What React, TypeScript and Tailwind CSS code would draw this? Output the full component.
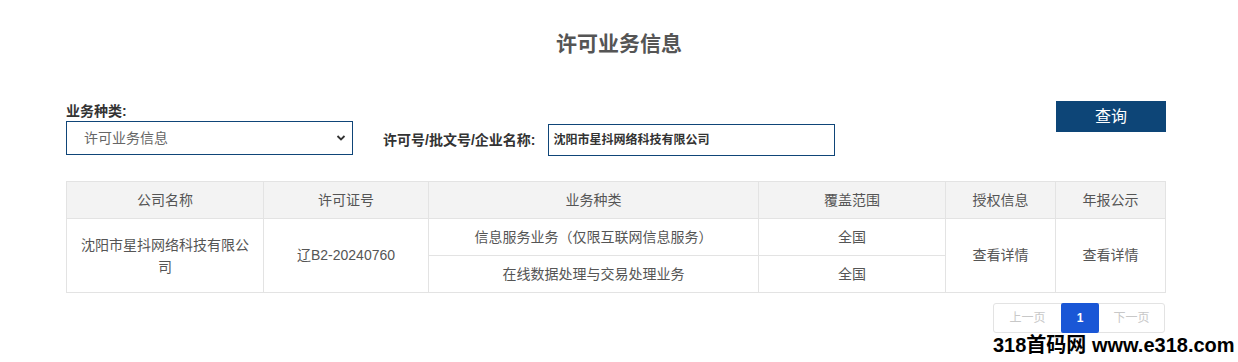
const font = { fontFamily: '"Liberation Sans", "Noto Sans CJK SC", sans-serif' }

export default function App() {
  return (
    <div className="relative w-[1238px] h-[362px] bg-white overflow-hidden text-[#555]" style={font}>
      {/* 标题 */}
      <h1 className="pt-[29px] text-center text-[21px] font-bold leading-[30px] text-[#555]">许可业务信息</h1>

      {/* 查询表单 */}
      <div className="mt-[43px] ml-[66px] w-[1100px] flex items-start">
        <div className="flex flex-col">
          <span className="text-[14px] font-bold leading-[18px] text-[#333]">业务种类:</span>
          <div className="mt-[1px] w-[287px] h-[34px] border border-[#0f4578] flex items-center justify-between pl-[17px] pr-[6px]">
            <span className="text-[14px] text-[#666]">许可业务信息</span>
            <svg width="10" height="10" viewBox="0 0 10 10">
              <path d="M1.5 3 L5 6.5 L8.5 3" fill="none" stroke="#333" strokeWidth="1.8" />
            </svg>
          </div>
        </div>
        <div className="ml-[30px] mt-[22px] flex items-center">
          <span className="text-[14px] font-bold text-[#333]">许可号/批文号/企业名称:</span>
          <div className="ml-[13px] w-[287px] h-[32px] border border-[#0f4578] flex items-center pl-[4px]">
            <span className="text-[12px] font-bold text-[#333]">沈阳市星抖网络科技有限公司</span>
          </div>
        </div>
        <button className="ml-auto -mt-[1px] w-[110px] h-[31px] bg-[#0d4577] text-white text-[16px] leading-[31px]">查询</button>
      </div>

      {/* 表格 */}
      <table className="mt-[25px] ml-[66px] w-[1100px] border-collapse text-[14px] text-[#555]">
        <thead>
          <tr className="h-[37px] bg-[#f3f3f3]">
            <th className="w-[197px] border border-[#e3e3e3] font-normal">公司名称</th>
            <th className="w-[165px] border border-[#e3e3e3] font-normal">许可证号</th>
            <th className="w-[330px] border border-[#e3e3e3] font-normal">业务种类</th>
            <th className="w-[187px] border border-[#e3e3e3] font-normal">覆盖范围</th>
            <th className="w-[110px] border border-[#e3e3e3] font-normal">授权信息</th>
            <th className="w-[110px] border border-[#e3e3e3] font-normal">年报公示</th>
          </tr>
        </thead>
        <tbody>
          <tr className="h-[37px]">
            <td rowSpan={2} className="border border-[#e3e3e3] text-center px-[14px] leading-[22px]">沈阳市星抖网络科技有限公司</td>
            <td rowSpan={2} className="border border-[#e3e3e3] text-center">辽B2-20240760</td>
            <td className="border border-[#e3e3e3] text-center">信息服务业务（仅限互联网信息服务）</td>
            <td className="border border-[#e3e3e3] text-center">全国</td>
            <td rowSpan={2} className="border border-[#e3e3e3] text-center">查看详情</td>
            <td rowSpan={2} className="border border-[#e3e3e3] text-center">查看详情</td>
          </tr>
          <tr className="h-[37px]">
            <td className="border border-[#e3e3e3] text-center">在线数据处理与交易处理业务</td>
            <td className="border border-[#e3e3e3] text-center">全国</td>
          </tr>
        </tbody>
      </table>

      {/* 分页 */}
      <div className="mt-[10px] ml-[993px] w-[172px] h-[30px] flex border border-[#e3e3e3] rounded-[3px] text-[12px]">
        <span className="w-[67px] flex items-center justify-center text-[#c8c8c8]">上一页</span>
        <span className="w-[38px] -my-px flex items-center justify-center bg-[#1a57d6] text-white font-bold rounded-[2px]">1</span>
        <span className="flex-1 flex items-center justify-center text-[#c8c8c8]">下一页</span>
      </div>

      {/* 水印 */}
      <div className="absolute left-[993px] top-[333px] whitespace-nowrap text-[20px] font-bold text-black leading-[24px]">
        318首码网 www.e318.com
      </div>
    </div>
  )
}
